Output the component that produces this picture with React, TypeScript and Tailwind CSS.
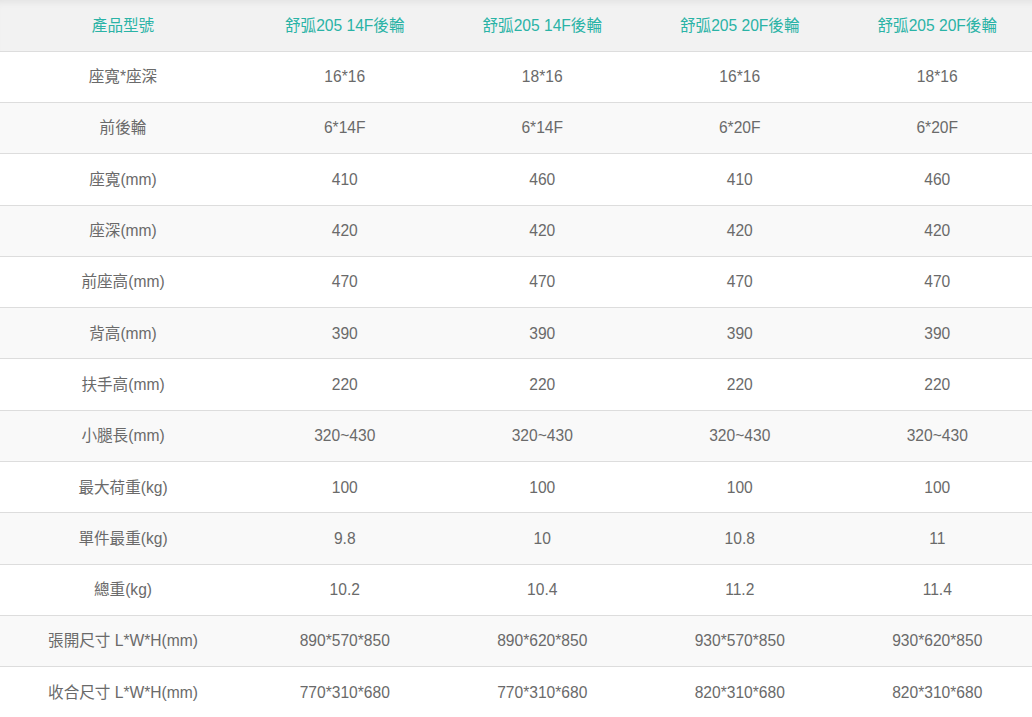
const header = ["產品型號", "舒弧205 14F後輪", "舒弧205 14F後輪", "舒弧205 20F後輪", "舒弧205 20F後輪"];

const rows: string[][] = [
  ["座寬*座深", "16*16", "18*16", "16*16", "18*16"],
  ["前後輪", "6*14F", "6*14F", "6*20F", "6*20F"],
  ["座寬(mm)", "410", "460", "410", "460"],
  ["座深(mm)", "420", "420", "420", "420"],
  ["前座高(mm)", "470", "470", "470", "470"],
  ["背高(mm)", "390", "390", "390", "390"],
  ["扶手高(mm)", "220", "220", "220", "220"],
  ["小腿長(mm)", "320~430", "320~430", "320~430", "320~430"],
  ["最大荷重(kg)", "100", "100", "100", "100"],
  ["單件最重(kg)", "9.8", "10", "10.8", "11"],
  ["總重(kg)", "10.2", "10.4", "11.2", "11.4"],
  ["張開尺寸 L*W*H(mm)", "890*570*850", "890*620*850", "930*570*850", "930*620*850"],
  ["收合尺寸 L*W*H(mm)", "770*310*680", "770*310*680", "820*310*680", "820*310*680"],
];

const cols = "grid grid-cols-[246px_197.5px_197.5px_197.5px_197.5px]";

export default function App() {
  return (
    <div
      className="w-[1032px] h-[717px] overflow-hidden bg-white text-[15.6px] text-[#6a6a6a]"
      style={{ fontFamily: '"Liberation Sans", Arial, "Noto Sans CJK TC", sans-serif' }}
    >
      <div className="w-[1036px]">
        <div
          className={`${cols} h-[51.7px] items-center border-b border-[#dddddd] bg-[#f2f2f2] text-[#2ab3a6] shadow-[inset_0_7px_7px_-5px_rgba(0,0,0,0.07)]`}
        >
          {header.map((h, i) => (
            <div key={i} className="text-center">
              {h}
            </div>
          ))}
        </div>
        {rows.map((r, ri) => (
          <div
            key={ri}
            className={`${cols} h-[51.3px] items-center border-b border-[#dddddd] ${
              ri % 2 === 0 ? "bg-white" : "bg-[#f9f9f9]"
            }`}
          >
            {r.map((c, ci) => (
              <div key={ci} className="text-center">
                {c}
              </div>
            ))}
          </div>
        ))}
      </div>
    </div>
  );
}
